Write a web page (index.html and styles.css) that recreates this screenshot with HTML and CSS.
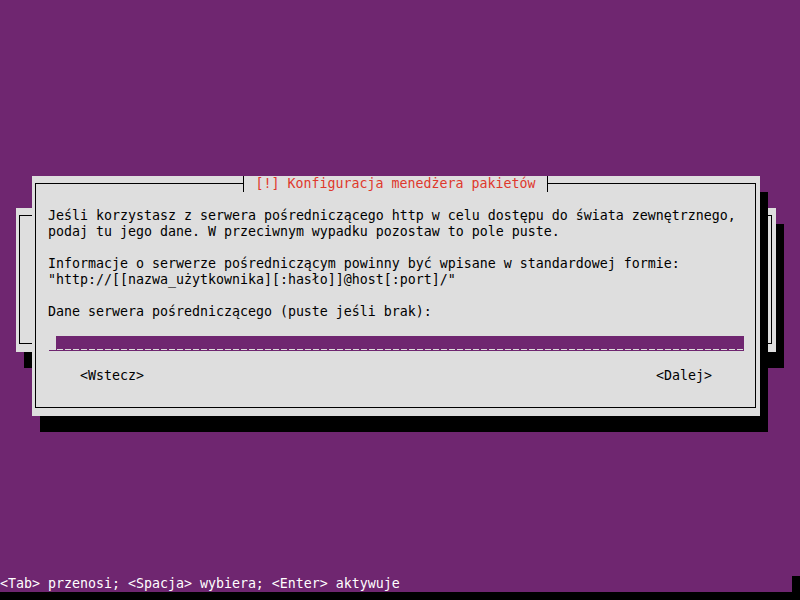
FILE: index.html
```html
<!DOCTYPE html>
<html lang="pl">
<head>
    <meta charset="UTF-8">
    <meta name="viewport" content="width=device-width, initial-scale=1.0">
    <title>Konfiguracja menedżera pakietów</title>
    <link rel="stylesheet" href="styles.css">
</head>
<body>
    <div class="screen">
        <div class="desktop">
            <!-- okno w tle -->
            <div class="window back">
                <div class="frame"></div>
            </div>

            <!-- okno dialogowe -->
            <div class="window front">
                <div class="frame">
                    <div class="title">[!] Konfiguracja menedżera pakietów</div>
                    <div class="content">
                        <p>Jeśli korzystasz z serwera pośredniczącego http w celu dostępu do świata zewnętrznego,<br>podaj tu jego dane. W przeciwnym wypadku pozostaw to pole puste.</p>
                        <p>Informacje o serwerze pośredniczącym powinny być wpisane w standardowej formie:<br>"http://[[nazwa_użytkownika][:hasło]]@host[:port]/"</p>
                        <p>Dane serwera pośredniczącego (puste jeśli brak):</p>
                        <div class="entry">
                            <div class="entry-field"></div>
                        </div>
                        <div class="buttons">
                            <span>&lt;Wstecz&gt;</span>
                            <span>&lt;Dalej&gt;</span>
                        </div>
                    </div>
                </div>
            </div>
        </div>

        <div class="status">
            <span>&lt;Tab&gt; przenosi; &lt;Spacja&gt; wybiera; &lt;Enter&gt; aktywuje</span>
            <span class="cursor"></span>
        </div>
        <div class="bottom"></div>
    </div>
</body>
</html>
```

FILE: styles.css
```css
* {
    box-sizing: border-box;
}
body {
    margin: 0;
    padding: 0;
    background-color: #6f2670;
    font-family: "DejaVu Sans Mono", "Liberation Mono", monospace;
    font-size: 13.29px;
    line-height: 16px;
    color: #000;
}
.screen {
    width: 800px;
    height: 600px;
    overflow: hidden;
    display: flex;
    flex-direction: column;
}
.desktop {
    position: relative;
    flex: 1;
}

/* okna */
.window {
    position: absolute;
    background-color: #dedede;
    box-shadow: 8px 16px 0 #000;
    padding: 7px 4px 8px 3px;
    display: flex;
}
.window.back {
    left: 16px;
    top: 208px;
    width: 760px;
    height: 144px;
}
.window.front {
    left: 32px;
    top: 176px;
    width: 728px;
    height: 240px;
}
.frame {
    flex: 1;
    border: 1px solid #000;
    display: flex;
    flex-direction: column;
}
.title {
    align-self: center;
    margin-top: -8px;
    height: 16px;
    padding: 0 12px;
    background-color: #dedede;
    border-left: 1px solid #000;
    border-right: 1px solid #000;
    color: #df382c;
    white-space: pre;
}
.content {
    padding: 16px 0 0 12px;
}
.content p {
    margin: 0 0 16px;
    white-space: pre;
}

/* pole tekstowe */
.entry {
    width: 696px;
    height: 16px;
    padding-left: 8px;
    position: relative;
    margin-bottom: 16px;
}
.entry::after {
    content: "";
    position: absolute;
    left: 1px;
    right: 0;
    top: 14px;
    height: 1px;
    background-color: #6f2670;
}
.entry-field {
    height: 14px;
    background-color: #6f2670;
    background-image: repeating-linear-gradient(to right, #6f2670 0 1px, #dedede 1px 7px, #6f2670 7px 8px);
    background-size: 100% 1px;
    background-position: 0 13px;
    background-repeat: no-repeat;
}

.buttons {
    width: 696px;
    padding: 0 32px;
    display: flex;
    justify-content: space-between;
    white-space: pre;
}

/* pasek stanu */
.status {
    height: 16px;
    display: flex;
    justify-content: space-between;
    color: #fff;
    white-space: pre;
}
.cursor {
    width: 8px;
    background-color: #000;
}
.bottom {
    height: 8px;
    background-color: #000;
}
```
